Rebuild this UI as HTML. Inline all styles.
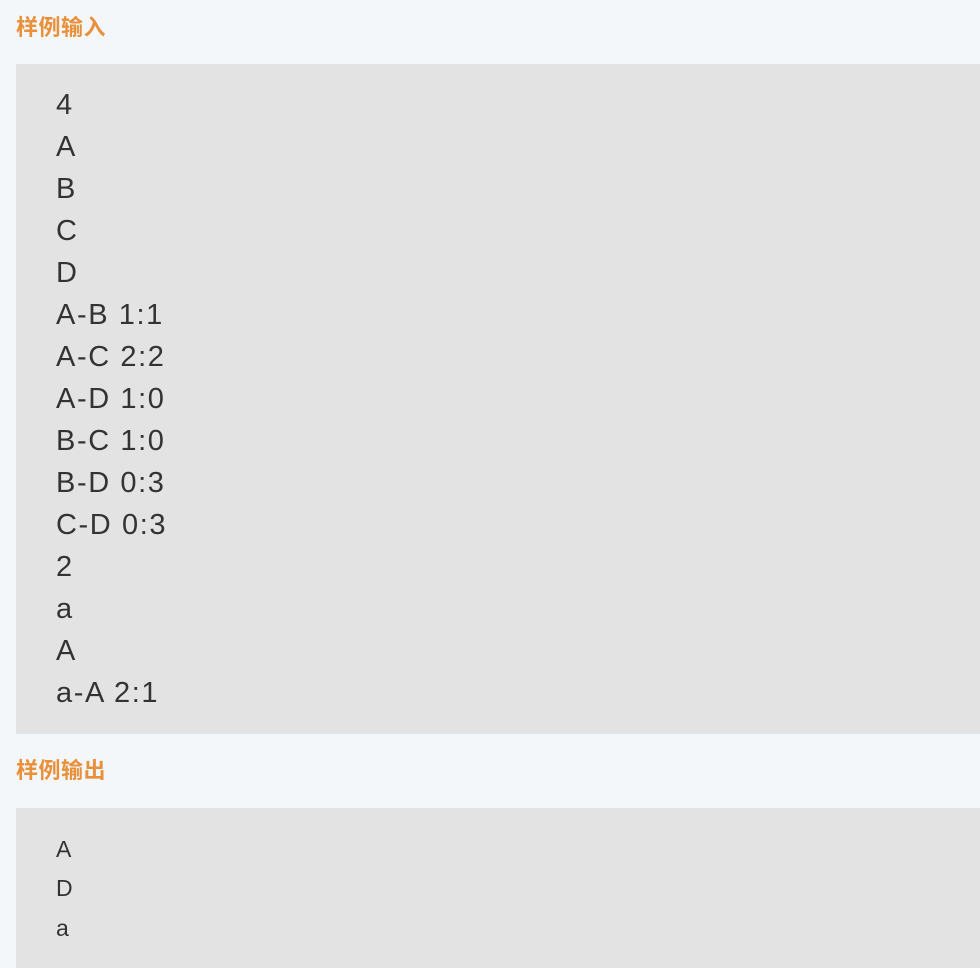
<!DOCTYPE html>
<html><head><meta charset="utf-8"><style>
html,body{margin:0;padding:0;background:#f4f7fa;width:980px;height:968px;overflow:hidden}
h3{position:absolute;left:16px;margin:0;font:bold 22px "Liberation Sans","Noto Sans CJK SC",sans-serif;color:#e8903a;line-height:24px;letter-spacing:0.5px}
.box{position:absolute;left:16px;width:980px;background:#e3e3e3}
.l1 div{position:absolute;left:40px;font:29px "Liberation Sans",sans-serif;color:#333;letter-spacing:1.6px;line-height:42px}
.l2 div{position:absolute;left:40px;font:23px "Liberation Sans",sans-serif;color:#333;line-height:40px}
</style></head><body>
<h3 style="top:16px">样例输入</h3>
<div class="box l1" style="top:64px;height:670px">
<div style="top:20px">4</div>
<div style="top:62px">A</div>
<div style="top:104px">B</div>
<div style="top:146px">C</div>
<div style="top:188px">D</div>
<div style="top:230px">A-B 1:1</div>
<div style="top:272px">A-C 2:2</div>
<div style="top:314px">A-D 1:0</div>
<div style="top:356px">B-C 1:0</div>
<div style="top:398px">B-D 0:3</div>
<div style="top:440px">C-D 0:3</div>
<div style="top:482px">2</div>
<div style="top:524px">a</div>
<div style="top:566px">A</div>
<div style="top:608px">a-A 2:1</div>
</div>
<h3 style="top:759px">样例输出</h3>
<div class="box l2" style="top:808px;height:160px">
<div style="top:21px">A</div>
<div style="top:60px">D</div>
<div style="top:100px">a</div>
</div>
</body></html>
